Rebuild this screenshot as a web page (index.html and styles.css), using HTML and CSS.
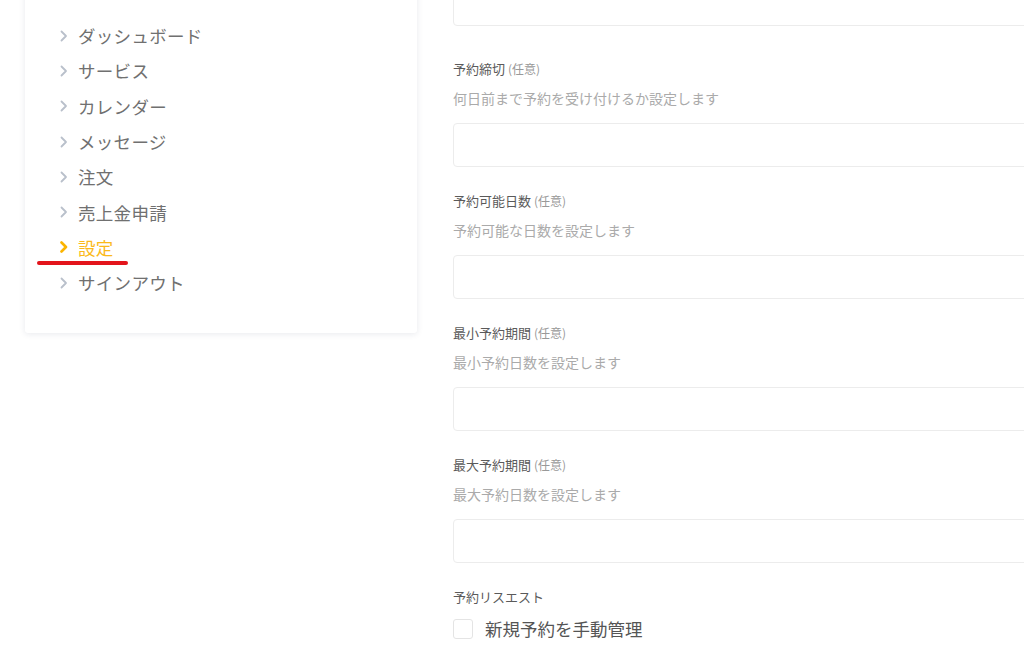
FILE: index.html
```html
<html lang="ja">
<head>
    <meta charset="UTF-8">
    <title>設定</title>
    <link rel="stylesheet" href="styles.css">
</head>
<body>
  <div id="page">
    <nav class="side-card">
      <ul class="menu">
        <li class="menu-item"><svg class="chev" viewBox="0 0 8 12"><path d="M1.5 1.5 6 6 1.5 10.5"/></svg>ダッシュボード</li>
        <li class="menu-item"><svg class="chev" viewBox="0 0 8 12"><path d="M1.5 1.5 6 6 1.5 10.5"/></svg>サービス</li>
        <li class="menu-item"><svg class="chev" viewBox="0 0 8 12"><path d="M1.5 1.5 6 6 1.5 10.5"/></svg>カレンダー</li>
        <li class="menu-item"><svg class="chev" viewBox="0 0 8 12"><path d="M1.5 1.5 6 6 1.5 10.5"/></svg>メッセージ</li>
        <li class="menu-item"><svg class="chev" viewBox="0 0 8 12"><path d="M1.5 1.5 6 6 1.5 10.5"/></svg>注文</li>
        <li class="menu-item"><svg class="chev" viewBox="0 0 8 12"><path d="M1.5 1.5 6 6 1.5 10.5"/></svg>売上金申請</li>
        <li class="menu-item active"><svg class="chev" viewBox="0 0 8 12"><path d="M1.5 1.5 6 6 1.5 10.5"/></svg>設定<span class="mark"></span></li>
        <li class="menu-item"><svg class="chev" viewBox="0 0 8 12"><path d="M1.5 1.5 6 6 1.5 10.5"/></svg>サインアウト</li>
      </ul>
    </nav>

    <main class="form">
      <div class="input first"></div>

      <div class="field">
        <p class="label">予約締切 <span class="opt">(任意)</span></p>
        <p class="help">何日前まで予約を受け付けるか設定します</p>
        <div class="input"></div>
      </div>

      <div class="field">
        <p class="label">予約可能日数 <span class="opt">(任意)</span></p>
        <p class="help">予約可能な日数を設定します</p>
        <div class="input"></div>
      </div>

      <div class="field">
        <p class="label">最小予約期間 <span class="opt">(任意)</span></p>
        <p class="help">最小予約日数を設定します</p>
        <div class="input"></div>
      </div>

      <div class="field">
        <p class="label">最大予約期間 <span class="opt">(任意)</span></p>
        <p class="help">最大予約日数を設定します</p>
        <div class="input"></div>
      </div>

      <div class="field">
        <p class="label">予約リスエスト</p>
        <label class="check"><span class="box"></span>新規予約を手動管理</label>
      </div>
    </main>
  </div>
</body>
</html>
```

FILE: styles.css
```css
* {
	box-sizing: border-box;
}
html, body {
	margin: 0;
	height: 100%;
	overflow: hidden;
	background: #fff;
}
body {
	font-family: "Noto Sans CJK JP", "Noto Sans", sans-serif;
	color: #666;
}
p {
	margin: 0;
}
#page {
	display: flex;
	align-items: flex-start;
	gap: 36px;
	padding-left: 25px;
	margin-top: -18px;
}

/* sidebar */
.side-card {
	flex: 0 0 392px;
	background: #fff;
	border-radius: 3px;
	box-shadow: 0 1px 6px rgba(30, 40, 80, 0.1);
	padding: 36px 0 33px 35px;
}
.menu {
	list-style: none;
	margin: 0;
	padding: 0;
}
.menu-item {
	position: relative;
	display: flex;
	align-items: center;
	height: 35.3px;
	font-size: 17.5px;
	color: #707070;
	letter-spacing: 0.3px;
}
.chev {
	width: 8px;
	height: 12px;
	margin-right: 10px;
	fill: none;
	stroke: #b9c0cb;
	stroke-width: 1.8;
	stroke-linecap: round;
	stroke-linejoin: round;
}
.menu-item.active {
	color: #fbb91a;
}
.menu-item.active .chev {
	stroke: #fbb400;
	stroke-width: 2.6;
}
.mark {
	position: absolute;
	left: -23px;
	top: 31px;
	width: 91px;
	height: 4px;
	border-radius: 2px;
	background: #e3141b;
}

/* form */
.form {
	flex: 0 0 640px;
}
.input {
	height: 44px;
	border: 1px solid #ececec;
	border-radius: 4px;
	background: #fff;
}
.input.first {
	margin-bottom: 33px;
}
.field {
	margin-bottom: 24px;
}
.label {
	font-size: 13px;
	line-height: 20px;
	color: #5a5a5a;
	margin-bottom: 9px;
}
.opt {
	font-size: 12px;
	color: #999;
}
.help {
	font-size: 14px;
	line-height: 20px;
	color: #aaa;
	margin-bottom: 15px;
}
.check {
	display: flex;
	align-items: center;
	gap: 12px;
	font-size: 17.5px;
	line-height: 30px;
	color: #555;
	margin-top: -2px;
}
.box {
	width: 20px;
	height: 20px;
	border: 1px solid #e4e4e4;
	border-radius: 3px;
}
```
